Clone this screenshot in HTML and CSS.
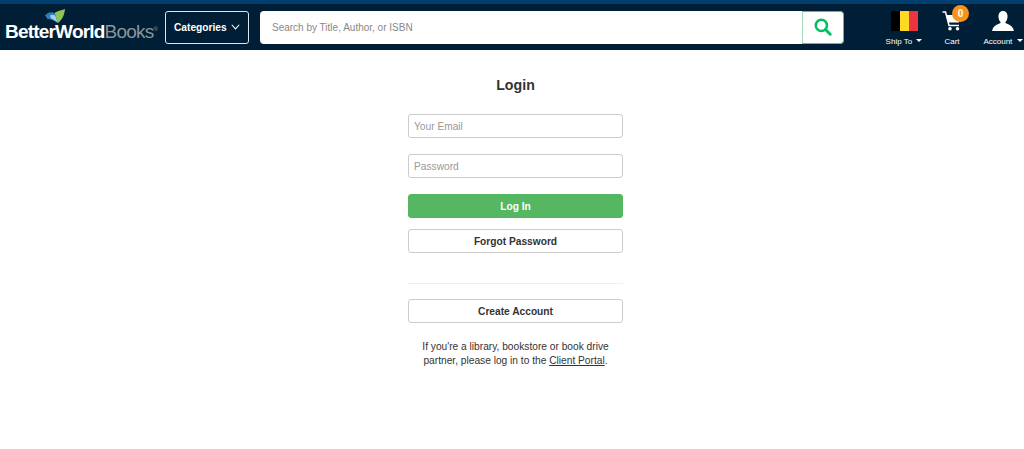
FILE: index.html
```html
<!DOCTYPE html>
<html lang="en">
<head>
  <meta charset="UTF-8">
  <meta name="viewport" content="width=device-width, initial-scale=1.0">
  <title>Login - Better World Books</title>
  <link rel="stylesheet" href="styles.css">
</head>
<body>
  <header class="site-header">
    <a class="logo" href="#">
      <svg class="logo-mark" viewBox="0 0 20 14" width="20" height="14" aria-hidden="true">
        <path d="M0 6.5 C3 3.5 6 2.5 9.5 4 L13 14 C9 11.5 5 10 2.5 10 Z" fill="#2a7dbf"/>
        <path d="M5 6.5 C7 5.5 9 5.5 10.5 7 L13 14 C10 11.5 8 10 6 9.5 Z" fill="#9fd0ee"/>
        <path d="M9.5 4 C12 2 16 1.5 20 0 C19.5 5 18 10 13 14 Z" fill="#8fc45a"/>
      </svg>
      <span class="logo-text"><b>BetterWorld</b><span class="logo-books">Books</span><sup>®</sup></span>
    </a>
    <button class="categories">Categories
      <svg viewBox="0 0 12 8" width="9" height="6" aria-hidden="true"><path d="M1 1 L6 6.5 L11 1" fill="none" stroke="#fff" stroke-width="1.4"/></svg>
    </button>
    <form class="search">
      <input class="search-input" type="text" placeholder="Search by Title, Author, or ISBN">
      <button class="search-btn" type="button" aria-label="Search">
        <svg viewBox="0 0 20 20" width="18" height="18" aria-hidden="true">
          <circle cx="8.2" cy="8.2" r="6.2" fill="none" stroke="#00bf63" stroke-width="2.8"/>
          <path d="M12.8 12.8 L18 18" stroke="#00bf63" stroke-width="3.2" stroke-linecap="round"/>
        </svg>
      </button>
    </form>
    <nav class="header-links">
      <a class="header-link ship" href="#">
        <span class="flag"><i class="black"></i><i class="yellow"></i><i class="red"></i></span>
        <span class="link-label">Ship To <i class="caret"></i></span>
      </a>
      <a class="header-link cart" href="#">
        <svg class="link-icon" viewBox="0 0 20 20" width="20" height="20" aria-hidden="true">
          <path d="M0.5 1 H3.5 L7 14.5 H17" fill="none" stroke="#fff" stroke-width="1.5"/>
          <path d="M4 4 H19 L17 11.5 H6 Z" fill="#fff"/>
          <circle cx="8" cy="17.7" r="1.8" fill="#fff"/>
          <circle cx="15.5" cy="17.7" r="1.8" fill="#fff"/>
        </svg>
        <span class="badge">0</span>
        <span class="link-label">Cart</span>
      </a>
      <a class="header-link account" href="#">
        <svg class="link-icon" viewBox="0 0 24 22" width="22" height="20" aria-hidden="true">
          <path d="M12 0 C15.5 0 17 3 17 6 C17 9 15.5 11.5 14.5 12.5 C14.5 14.5 23 15 24 22 H0 C1 15 9.5 14.5 9.5 12.5 C8.5 11.5 7 9 7 6 C7 3 8.5 0 12 0 Z" fill="#fff"/>
        </svg>
        <span class="link-label">Account <i class="caret"></i></span>
      </a>
    </nav>
  </header>

  <main class="login">
    <h1>Login</h1>
    <input class="field" type="email" placeholder="Your Email">
    <input class="field" type="password" placeholder="Password">
    <button class="btn btn-green">Log In</button>
    <button class="btn btn-forgot">Forgot Password</button>
    <hr>
    <button class="btn">Create Account</button>
    <p class="partner">If you're a library, bookstore or book drive partner, please log in to the <a href="#">Client Portal</a>.</p>
  </main>
</body>
</html>
```

FILE: styles.css
```css
body {
  margin: 0;
  font-family: "Liberation Sans", Arial, sans-serif;
  background: #fff;
  color: #333;
}
.site-header {
  display: flex;
  align-items: center;
  height: 46px;
  background: #001f36;
  border-top: 4px solid #003f6e;
}
.logo {
  position: relative;
  display: block;
  width: 165px;
  height: 46px;
  flex-shrink: 0;
  text-decoration: none;
}
.logo-mark {
  position: absolute;
  left: 45px;
  top: 5px;
}
.logo-text {
  position: absolute;
  left: 5px;
  top: 16px;
  font-size: 19px;
  line-height: 24px;
  letter-spacing: -0.8px;
  color: #fff;
  white-space: nowrap;
}
.logo-books {
  color: #8a949c;
}
.logo-text sup {
  font-size: 6px;
  line-height: 0;
  letter-spacing: 0;
  color: #8a949c;
}
.categories {
  display: flex;
  align-items: center;
  gap: 4px;
  width: 84px;
  height: 33px;
  padding: 0 0 0 8px;
  flex-shrink: 0;
  font: bold 10.2px "Liberation Sans", Arial, sans-serif;
  color: #fff;
  background: transparent;
  border: 1px solid #dfe6ea;
  border-radius: 3px;
}
.search {
  display: flex;
  width: 584px;
  height: 33px;
  margin-left: 11px;
  flex-shrink: 0;
}
.search-input {
  flex: 1;
  min-width: 0;
  padding: 0 12px;
  font: 10px "Liberation Sans", Arial, sans-serif;
  background: #fff;
  border: none;
  border-radius: 4px 0 0 4px;
}
.search-input::placeholder {
  color: #888;
}
.search-btn {
  display: flex;
  align-items: center;
  justify-content: center;
  width: 42px;
  padding: 0;
  background: #fff;
  border: 1px solid #5fc07e;
  border-left-color: #a9dcb8;
  border-radius: 0 4px 4px 0;
}
.header-links {
  display: flex;
  margin-left: auto;
}
.header-link {
  position: relative;
  display: flex;
  flex-direction: column;
  align-items: center;
  justify-content: space-between;
  height: 40px;
  color: #fff;
  text-decoration: none;
}
.ship,
.cart {
  width: 48px;
}
.account {
  width: 42px;
  margin-left: 6px;
}
.link-icon {
  margin-top: 4px;
}
.flag {
  display: flex;
  width: 27px;
  height: 20px;
  margin-top: 4px;
}
.flag i {
  flex: 1;
}
.black {
  background: #000;
}
.yellow {
  background: #fdda24;
}
.red {
  background: #ef3340;
}
.link-label {
  font-size: 8px;
  line-height: 10px;
  white-space: nowrap;
}
.caret {
  display: inline-block;
  margin-left: 2px;
  vertical-align: 2px;
  border-left: 3px solid transparent;
  border-right: 3px solid transparent;
  border-top: 3px solid #fff;
}
.badge {
  position: absolute;
  top: -2px;
  right: 7px;
  width: 17px;
  height: 17px;
  font-size: 10px;
  font-weight: bold;
  line-height: 17px;
  text-align: center;
  background: #f7941d;
  border-radius: 50%;
}
.login {
  display: flex;
  flex-direction: column;
  width: 215px;
  margin-left: 408px;
}
h1 {
  margin: 26px 0 20px;
  font-size: 14.2px;
  line-height: 18px;
  text-align: center;
}
.field {
  height: 24px;
  margin-bottom: 16px;
  padding: 0 5px;
  box-sizing: border-box;
  font: 10.2px "Liberation Sans", Arial, sans-serif;
  border: 1px solid #ccc;
  border-radius: 3px;
}
.field::placeholder {
  color: #999;
}
.btn {
  height: 24px;
  padding: 0;
  font: bold 10.2px "Liberation Sans", Arial, sans-serif;
  color: #333;
  background: #fff;
  border: 1px solid #ccc;
  border-radius: 3px;
}
.btn-green {
  color: #fff;
  background: #55b761;
  border-color: #55b761;
}
.btn-forgot {
  margin-top: 11px;
}
hr {
  width: 100%;
  margin: 30px 0 15px;
  border: none;
  border-top: 1px solid #eee;
}
.partner {
  margin: 17px 0 0;
  font-size: 10.2px;
  line-height: 14px;
  text-align: center;
}
.partner a {
  color: #333;
}
```
